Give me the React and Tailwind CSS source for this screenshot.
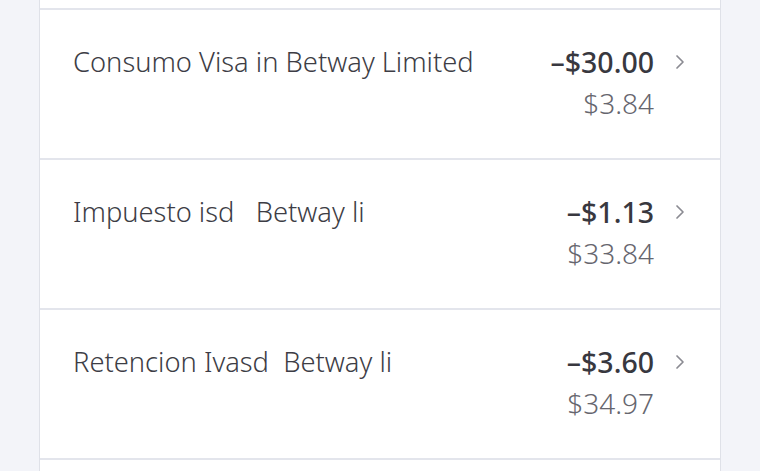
const rows = [
  { title: "Consumo Visa in Betway Limited", amount: "–$30.00", balance: "$3.84" },
  { title: "Impuesto isd   Betway li", amount: "–$1.13", balance: "$33.84" },
  { title: "Retencion Ivasd  Betway li", amount: "–$3.60", balance: "$34.97" },
];

function Chevron() {
  return (
    <svg width="10" height="16" viewBox="0 0 10 16" fill="none" className="text-[#8b8b92]">
      <path d="M2 2 L8 8 L2 14" stroke="currentColor" strokeWidth="1.7" strokeLinecap="round" strokeLinejoin="round" />
    </svg>
  );
}

export default function App() {
  return (
    <div className="h-[471px] overflow-hidden bg-[#f3f4f9] px-[39px]" style={{ fontFamily: '"Noto Sans", sans-serif' }}>
      <div className="border-x border-[#dfe1e8] bg-white">
        <div className="h-[8px]" />
        {rows.map((r) => (
          <div key={r.amount} className="flex h-[150px] border-t-2 border-[#e3e5ec] pl-[33px] pr-[35px] pt-[31px]">
            <div className="flex-1 whitespace-pre text-[27.3px] font-light leading-[42px] text-[#3d3d45]">{r.title}</div>
            <div className="flex flex-col items-end">
              <div className="text-[28.5px] font-medium leading-[42px] text-[#38383f]">{r.amount}</div>
              <div className="text-[28px] font-light leading-[40px] text-[#66666e]">{r.balance}</div>
            </div>
            <div className="ml-[21px] flex h-[42px] items-center">
              <Chevron />
            </div>
          </div>
        ))}
        <div className="h-[20px] border-t-2 border-[#e3e5ec]" />
      </div>
    </div>
  );
}
